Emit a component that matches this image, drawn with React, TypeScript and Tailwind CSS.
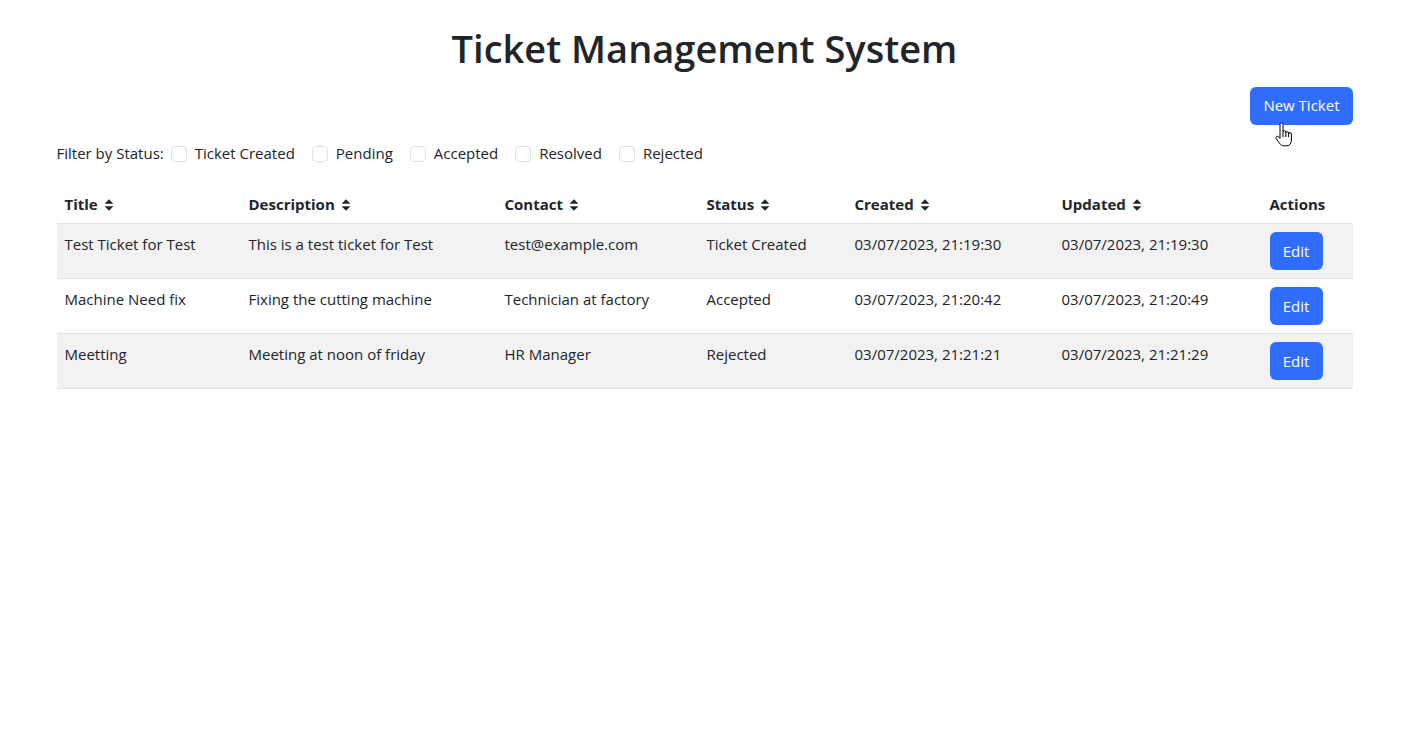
import React from "react";

const tickets = [
  {
    title: "Test Ticket for Test",
    description: "This is a test ticket for Test",
    contact: "test@example.com",
    status: "Ticket Created",
    created: "03/07/2023, 21:19:30",
    updated: "03/07/2023, 21:19:30",
  },
  {
    title: "Machine Need fix",
    description: "Fixing the cutting machine",
    contact: "Technician at factory",
    status: "Accepted",
    created: "03/07/2023, 21:20:42",
    updated: "03/07/2023, 21:20:49",
  },
  {
    title: "Meetting",
    description: "Meeting at noon of friday",
    contact: "HR Manager",
    status: "Rejected",
    created: "03/07/2023, 21:21:21",
    updated: "03/07/2023, 21:21:29",
  },
];

const statuses = ["Ticket Created", "Pending", "Accepted", "Resolved", "Rejected"];

function SortIcon() {
  return (
    <svg width="10" height="14" viewBox="0 0 10 14" className="inline-block ml-[6px] -mt-[2px] align-middle">
      <path d="M0.6 5.8 L5 1.2 L9.4 5.8 Z" fill="#212529" />
      <path d="M0.6 8.2 L5 12.8 L9.4 8.2 Z" fill="#212529" />
    </svg>
  );
}

function HandCursor() {
  return (
    <svg width="20" height="26" viewBox="0 0 20 26" className="absolute left-[1274px] top-[122px] pointer-events-none">
      <path
        d="M6 2.5c0-1 .7-1.6 1.5-1.6S9 1.5 9 2.5V10c0-.8.6-1.4 1.4-1.4s1.4.6 1.4 1.4v1c0-.8.6-1.4 1.4-1.4s1.4.6 1.4 1.4v1c0-.8.6-1.4 1.4-1.4s1.4.6 1.4 1.4v6c0 3-1.6 5.8-4.4 5.8H9.5c-1.6 0-2.6-.8-3.6-2L2.3 16.8c-.6-.8-.5-1.8.2-2.3.7-.5 1.6-.3 2.2.4L6 16.3V2.5z"
        fill="#fff"
        stroke="#000"
        strokeWidth="1"
        strokeLinejoin="round"
      />
      <path d="M9 10v5M11.8 11v4M14.6 12v3" stroke="#000" strokeWidth="1" />
    </svg>
  );
}

export default function App() {
  return (
    <div className="relative min-h-screen bg-white text-[#212529] font-['Segoe_UI','Open_Sans','Noto_Sans',sans-serif] text-[15px]">
      <div className="max-w-[1320px] mx-auto px-3">
        <h1 className="text-center text-[38px] font-semibold leading-[1.2] pt-[26px] mb-[15px]">
          Ticket Management System
        </h1>

        <div className="flex justify-end">
          <button className="bg-[#316dfc] text-white rounded-[6px] px-[13px] h-[38px] leading-none">
            New Ticket
          </button>
        </div>

        <div className="flex items-center mt-[17px] h-[24px]">
          <span className="mr-[7px]">Filter by Status:</span>
          {statuses.map((s) => (
            <label key={s} className="flex items-center mr-[17px]">
              <span className="w-[16px] h-[16px] border border-[#dee2e6] rounded-[4px] bg-white mr-[8px]" />
              <span>{s}</span>
            </label>
          ))}
        </div>

        <table className="w-full mt-[19px] table-fixed border-collapse">
          <colgroup>
            <col className="w-[184px]" />
            <col className="w-[256px]" />
            <col className="w-[202px]" />
            <col className="w-[148px]" />
            <col className="w-[207px]" />
            <col className="w-[208px]" />
            <col className="w-[91px]" />
          </colgroup>
          <thead>
            <tr className="border-b border-[#dee2e6] text-left">
              {["Title", "Description", "Contact", "Status", "Created", "Updated"].map((h) => (
                <th key={h} className="px-2 py-[7px] font-bold leading-[24px]">
                  {h}
                  <SortIcon />
                </th>
              ))}
              <th className="px-2 py-[7px] font-bold leading-[24px]">Actions</th>
            </tr>
          </thead>
          <tbody>
            {tickets.map((t, i) => (
              <tr key={t.title} className={`border-b border-[#dee2e6] align-top ${i % 2 === 0 ? "bg-[#f2f2f2]" : "bg-white"}`}>
                <td className="px-2 py-2 leading-[24px]">{t.title}</td>
                <td className="px-2 py-2 leading-[24px]">{t.description}</td>
                <td className="px-2 py-2 leading-[24px]">{t.contact}</td>
                <td className="px-2 py-2 leading-[24px]">{t.status}</td>
                <td className="px-2 py-2 leading-[24px]">{t.created}</td>
                <td className="px-2 py-2 leading-[24px]">{t.updated}</td>
                <td className="px-2 py-2 leading-[24px]">
                  <button className="block bg-[#316dfc] text-white rounded-[6px] w-[53px] h-[38px]">Edit</button>
                </td>
              </tr>
            ))}
          </tbody>
        </table>
      </div>
      <HandCursor />
    </div>
  );
}
